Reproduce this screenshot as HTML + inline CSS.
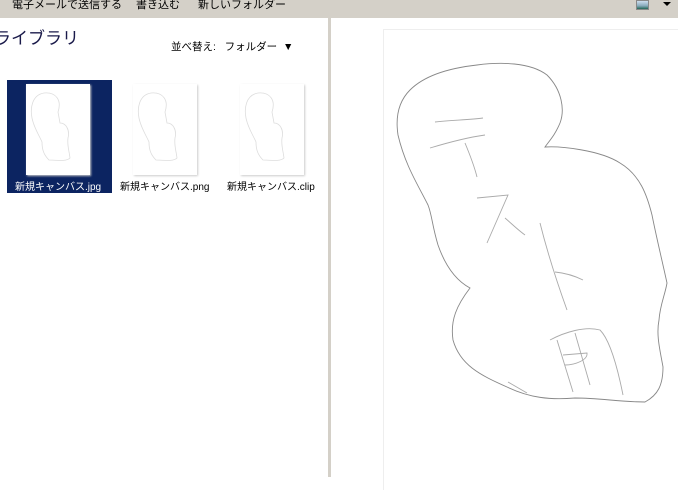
<!DOCTYPE html>
<html><head><meta charset="utf-8"><style>
body{margin:0;width:678px;height:477px;overflow:hidden;background:#fff;font-family:"Liberation Sans","Noto Sans CJK JP",sans-serif;position:relative}
.tb{position:absolute;left:0;top:0;width:678px;height:18px;background:#d4d0c8;font-size:11px;color:#000}
.tb span{position:absolute;top:-4px;white-space:nowrap}
.split{position:absolute;left:328px;top:18px;width:3px;height:459px;background:#d4d0c8}
.t{position:absolute;white-space:nowrap}
.sel{position:absolute;left:7px;top:80px;width:105px;height:113px;background:#0c2461}
.th{position:absolute;width:64px;height:91px;background:#fff;top:84px;box-shadow:1px 1px 2px #ccc}
.lbl{position:absolute;top:178px;font-size:10px;white-space:nowrap}
</style></head><body>
<div class="tb">
<span style="left:12px">電子メールで送信する</span>
<span style="left:136px">書き込む</span>
<span style="left:198px">新しいフォルダー</span>
<div style="position:absolute;left:636px;top:0;width:11px;height:8px;background:linear-gradient(#cde 0,#8ab 60%,#265 100%);border:1px solid #888"></div>
<div style="position:absolute;left:663px;top:2px;width:0;height:0;border-left:4px solid transparent;border-right:4px solid transparent;border-top:4px solid #000"></div>
</div>
<div class="t" style="left:-6px;top:24px;font-size:17px;color:#1a1a4a">ライブラリ</div>
<div class="t" style="left:171px;top:39px;font-size:10.5px">並べ替え:&nbsp;&nbsp;&nbsp;フォルダー&nbsp;&nbsp;▼</div>
<div class="sel"></div>
<div class="th" style="left:26px"></div>
<div class="th" style="left:133px"></div>
<div class="th" style="left:240px"></div>
<div class="lbl" style="left:15px;color:#fff">新規キャンバス.jpg</div>
<div class="lbl" style="left:120px">新規キャンバス.png</div>
<div class="lbl" style="left:227px">新規キャンバス.clip</div>
<div class="split"></div>
<div style="position:absolute;left:383px;top:29px;width:300px;height:460px;border-left:1px solid #eee;border-top:1px solid #eee"></div>
<svg style="position:absolute;left:0;top:0" width="678" height="477" fill="none" stroke="#888" stroke-width="0.9">
<path d="M545,147 C560,146 600,150 620,163 C640,175 647,195 652,215 C657,240 662,260 667,283 C665,295 660,305 659,320 C656,335 660,350 663,367 C663,385 658,395 645,402 C620,402 600,398 575,398 C550,400 530,398 507,387 C480,375 460,365 453,340 C450,320 457,305 470,288 C455,280 445,265 438,245 C432,225 432,215 428,205 C418,185 405,165 398,135 C395,115 400,100 410,90 C425,75 450,68 477,65 C500,62 530,62 547,75 C562,90 565,110 560,123 C555,135 550,140 545,147 Z"/>
<g stroke="#aaa">
<path d="M435,122 C450,120 470,120 483,118"/>
<path d="M430,148 C450,142 470,137 485,135"/>
<path d="M465,143 C470,155 474,165 477,177"/>
<path d="M477,198 L508,195 L487,243"/>
<path d="M505,218 C512,224 518,230 525,235"/>
<path d="M540,223 C548,255 558,285 567,310"/>
<path d="M555,272 C565,273 575,276 583,280"/>
<path d="M550,340 C565,332 585,326 600,330 C610,340 618,370 623,395"/>
<path d="M557,340 L573,392"/>
<path d="M575,333 L590,385"/>
<path d="M563,355 L587,353 C588,360 575,365 565,365"/>
<path d="M508,382 L527,393"/>
</g></svg>
<svg style="position:absolute;left:0;top:0" width="678" height="477" fill="none" stroke="#ddd" stroke-width="0.8">
<path id="m" d="M66,133 C72,133 76,140 74,148 C73,155 75,160 76,168 C72,172 62,170 55,170 C50,165 48,160 48,152 C45,145 40,138 38,128 C36,118 38,105 50,103 C62,102 68,110 64,122 Z" transform="translate(-6,-10)"/>
<use href="#m" x="107"/><use href="#m" x="214"/>
</svg>
</body></html>
